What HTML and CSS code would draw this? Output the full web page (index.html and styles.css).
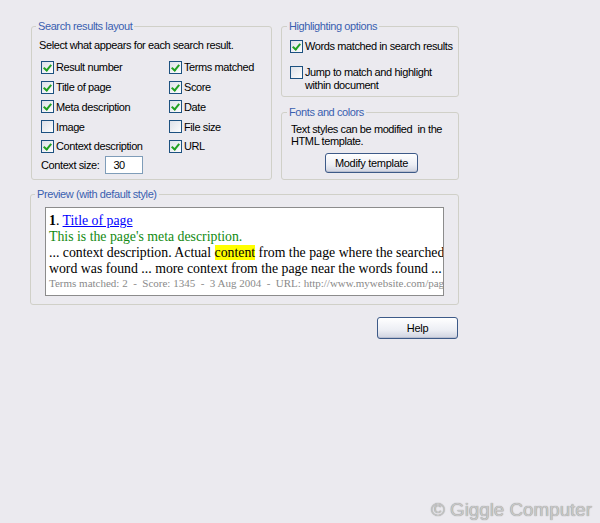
FILE: index.html
```html
<!DOCTYPE html>
<html lang="en">
<head>
    <meta charset="UTF-8">
    <title>Search results layout</title>
    <link rel="stylesheet" href="styles.css">
</head>
<body>
    <div class="dialog">
        <div class="top-row">
            <fieldset class="group layout-group">
                <legend>Search results layout</legend>
                <p class="hint">Select what appears for each search result.</p>
                <div class="check-grid">
                    <label class="check"><span class="box on"></span>Result number</label>
                    <label class="check"><span class="box on"></span>Terms matched</label>
                    <label class="check"><span class="box on"></span>Title of page</label>
                    <label class="check"><span class="box on"></span>Score</label>
                    <label class="check"><span class="box on"></span>Meta description</label>
                    <label class="check"><span class="box on"></span>Date</label>
                    <label class="check"><span class="box"></span>Image</label>
                    <label class="check"><span class="box"></span>File size</label>
                    <label class="check"><span class="box on"></span>Context description</label>
                    <label class="check"><span class="box on"></span>URL</label>
                </div>
                <div class="context-row">
                    <span>Context size:</span>
                    <span class="field">30</span>
                </div>
            </fieldset>

            <div class="side">
                <fieldset class="group highlight-group">
                    <legend>Highlighting options</legend>
                    <label class="check"><span class="box on"></span>Words matched in search results</label>
                    <label class="check two-line"><span class="box"></span><span>Jump to match and highlight<br>within document</span></label>
                </fieldset>
                <fieldset class="group fonts-group">
                    <legend>Fonts and colors</legend>
                    <p class="note">Text styles can be modified&nbsp; in the<br>HTML template.</p>
                    <div class="center">
                        <button class="btn modify">Modify template</button>
                    </div>
                </fieldset>
            </div>
        </div>

        <fieldset class="group preview-group">
            <legend>Preview (with default style)</legend>
            <div class="preview">
                <div class="line"><b>1</b>. <a href="#">Title of page</a></div>
                <div class="line meta">This is the page's meta description.</div>
                <div class="line">... context description. Actual <span class="hit">content</span> from the page where the searched</div>
                <div class="line">word was found ... more context from the page near the words found ...</div>
                <div class="line info">Terms matched: 2&nbsp; - &nbsp;Score: 1345&nbsp; - &nbsp;3 Aug 2004&nbsp; - &nbsp;URL: http://www.mywebsite.com/page.html</div>
            </div>
        </fieldset>

        <div class="actions">
            <button class="btn help">Help</button>
        </div>
    </div>

    <div class="watermark">&copy; Giggle Computer</div>
</body>
</html>
```

FILE: styles.css
```css
body {
    margin: 0;
    height: 523px;
    background-color: #ebeaef;
    font-family: 'Liberation Sans', Arial, sans-serif;
    font-size: 11px;
    letter-spacing: -0.4px;
    color: #000;
    position: relative;
    overflow: hidden;
}

.dialog {
    width: 429px;
    padding: 20px 0 0 30px;
}

.top-row {
    display: flex;
    gap: 9px;
}

/* Group boxes */
.group {
    margin: 0;
    min-width: 0;
    border: 1px solid #d0d0c8;
    border-radius: 3px;
    box-sizing: border-box;
}

.group legend {
    padding: 0 2px;
    line-height: 13px;
    color: #3a5fb0;
}

.layout-group {
    width: 243px;
    padding: 6px 6px 5px 7px;
    margin-left: 1px;
}

.layout-group legend {
    margin-left: -3px;
}

.hint {
    margin: 0;
    line-height: 13px;
}

.check-grid {
    display: grid;
    grid-template-columns: 128px auto;
    grid-auto-rows: 19.75px;
    margin-top: 5.5px;
    padding-left: 2px;
}

.check {
    display: flex;
    align-items: center;
    gap: 2px;
    white-space: nowrap;
}

.box {
    width: 13px;
    height: 13px;
    box-sizing: border-box;
    border: 1px solid #1c5180;
    background: linear-gradient(135deg, #dde1e8, #fdfdfd);
    flex-shrink: 0;
    position: relative;
}

.box.on::after {
    content: "";
    position: absolute;
    left: 3px;
    top: 1px;
    width: 3px;
    height: 6px;
    border: solid #21a121;
    border-width: 0 2px 2px 0;
    transform: rotate(40deg);
}

.context-row {
    display: flex;
    align-items: center;
    gap: 6px;
    padding-left: 2px;
}

.field {
    width: 38px;
    height: 18px;
    box-sizing: border-box;
    border: 1px solid #7f9db9;
    background: #fff;
    padding-left: 7px;
    line-height: 16px;
}

.side {
    display: flex;
    flex-direction: column;
    gap: 9px;
    width: 178px;
}

.highlight-group {
    padding: 7px 6px 4px 8px;
}

.highlight-group legend {
    margin-left: -3px;
}

.highlight-group .check {
    line-height: 13px;
}

.highlight-group .check + .check {
    margin-top: 13px;
}

.two-line {
    align-items: flex-start;
}

.fonts-group {
    padding: 4px 6px 6px 9px;
}

.fonts-group legend {
    margin-left: -4px;
}

.note {
    margin: 0;
    line-height: 12px;
}

.center {
    display: flex;
    justify-content: center;
    margin-top: 6px;
}

/* Buttons */
.btn {
    font-family: 'Liberation Sans', Arial, sans-serif;
    font-size: 11px;
    letter-spacing: -0.3px;
    color: #000;
    border: 1px solid #3d5a88;
    border-radius: 3px;
    background: linear-gradient(#ffffff, #eceef4 60%, #cfd3e0);
    box-shadow: inset 0 -1px 0 #b9bfd0;
    padding: 0;
    cursor: pointer;
}

.modify {
    width: 93px;
    height: 20px;
}

/* Preview */
.preview-group {
    width: 429px;
    margin-top: 8px;
    padding: 6px 14px 8px 14px;
}

.preview-group legend {
    margin-left: -10px;
}

.preview {
    height: 89px;
    box-sizing: border-box;
    border: 1px solid #8c8c8c;
    background: #fff;
    padding: 5px 0 0 3px;
    overflow: hidden;
    font-family: 'Liberation Serif', 'Times New Roman', serif;
    font-size: 13.8px;
    letter-spacing: 0;
}

.line {
    white-space: nowrap;
    line-height: 16px;
}

.line a {
    color: #0000ff;
}

.meta {
    color: #128a12;
}

.hit {
    background: #ffff00;
}

.info {
    font-size: 11px;
    color: #8a8a8a;
    line-height: 12px;
}

.actions {
    display: flex;
    justify-content: flex-end;
    margin-top: 12px;
}

.help {
    width: 81px;
    height: 22px;
    margin-right: 1px;
}

.watermark {
    position: absolute;
    right: 8px;
    bottom: 2px;
    font-family: 'Liberation Sans', Arial, sans-serif;
    font-size: 18.8px;
    letter-spacing: 0;
    color: #c8c8c8;
    text-shadow: 0 0 1px #777;
}
```
